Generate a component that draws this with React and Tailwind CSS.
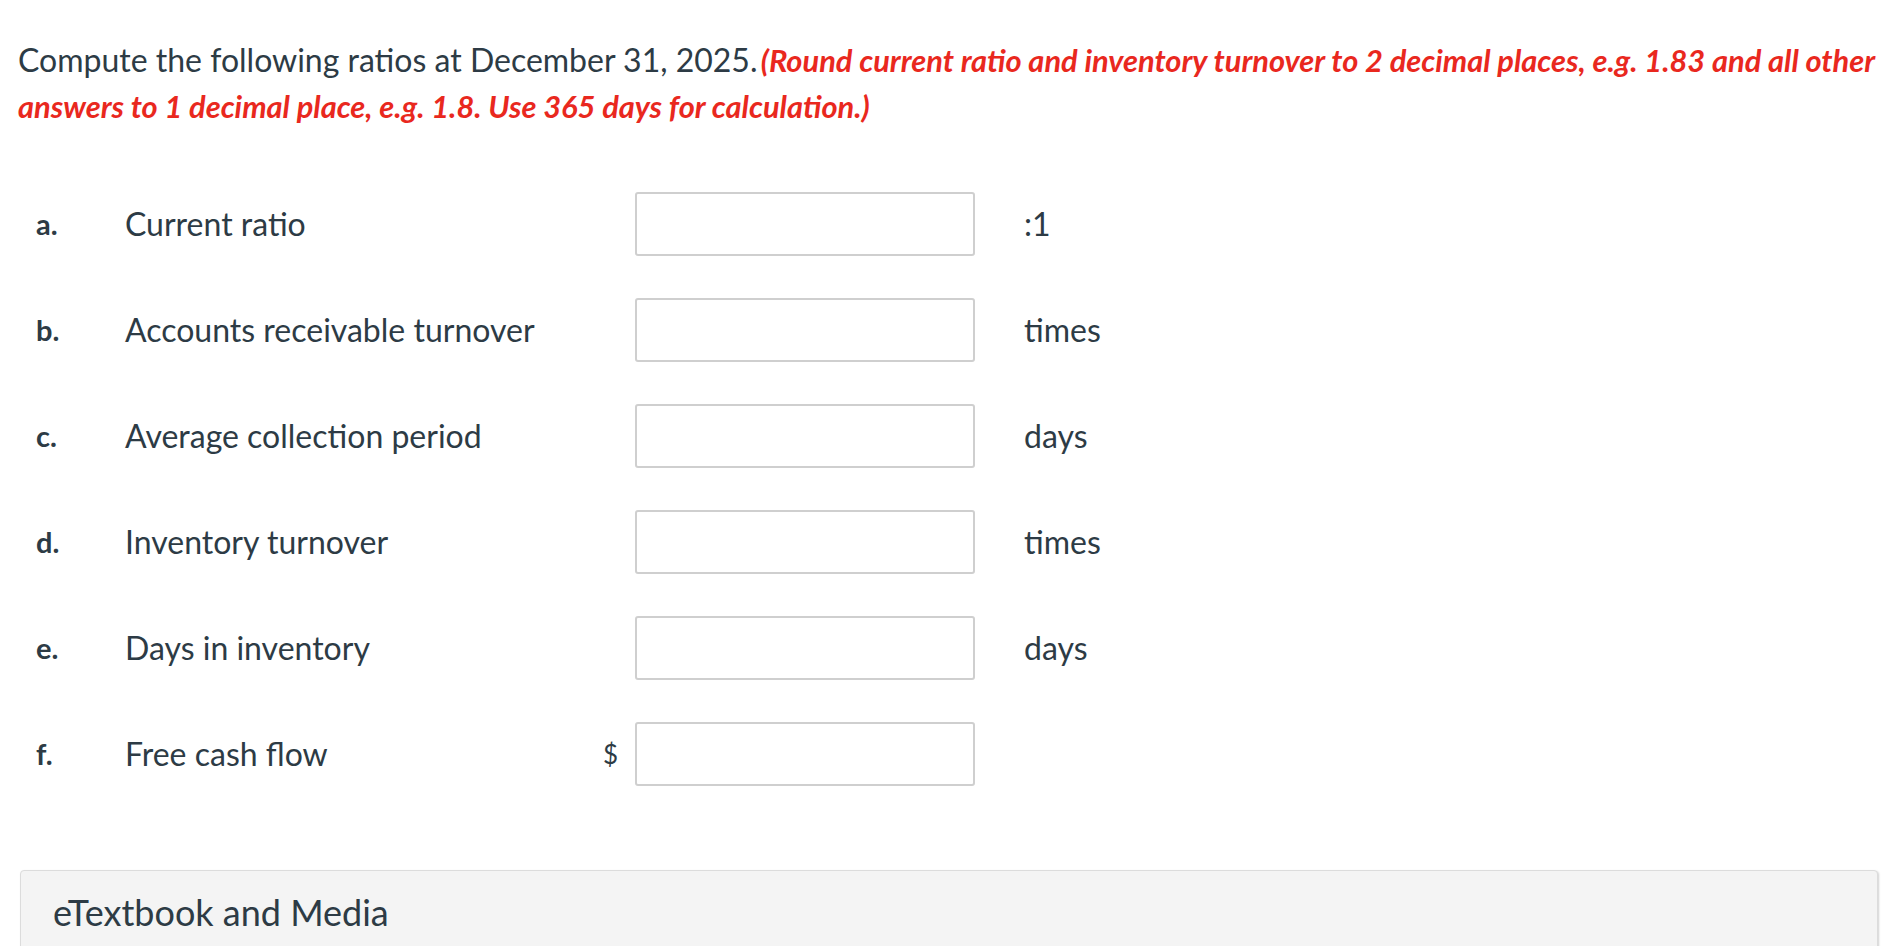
import React from 'react';

// Ratio rows shown in the exercise
const rows = [
  { letter: 'a.', label: 'Current ratio', unit: ':1' },
  { letter: 'b.', label: 'Accounts receivable turnover', unit: 'times' },
  { letter: 'c.', label: 'Average collection period', unit: 'days' },
  { letter: 'd.', label: 'Inventory turnover', unit: 'times' },
  { letter: 'e.', label: 'Days in inventory', unit: 'days' },
  { letter: 'f.', label: 'Free cash flow', unit: '', dollar: true },
];

const RatioRow = ({ letter, label, unit, dollar }) => (
  <div className="flex items-center h-[64px]">
    <span className="w-[89px] font-bold text-[29px]">{letter}</span>
    <span className="w-[478px] text-[32px]">{label}</span>
    <span className="w-[32px] text-[26px]">{dollar ? '$' : ''}</span>
    <input
      type="text"
      className="w-[340px] h-[64px] border-2 border-[#cfcfcf] rounded-[3px] bg-white outline-none"
    />
    <span className="ml-[49px] text-[32px]">{unit}</span>
  </div>
);

export default function App() {
  return (
    <div className="min-h-screen bg-white text-[#2d3b45] font-['Lato','Liberation_Sans',sans-serif] pl-[18px] pr-[26px] overflow-hidden">
      <p className="pt-[37px] text-[32px] leading-[46px] whitespace-nowrap">
        Compute the following ratios at December 31, 2025.{' '}
        <span className="ml-[-5px] text-[#e9281e] font-bold italic text-[30.8px] leading-[30px]">
          (Round current ratio and inventory turnover to 2 decimal places, e.g. 1.83 and all other
          <br />
          answers to 1 decimal place, e.g. 1.8. Use 365 days for calculation.)
        </span>
      </p>

      <div className="mt-[63px] pl-[18px] flex flex-col gap-[42px]">
        {rows.map((row) => (
          <RatioRow key={row.letter} {...row} />
        ))}
      </div>

      <div className="mt-[84px] ml-[2px] h-[120px] bg-[#f4f4f4] border border-[#dcdcdc] rounded-[4px] shadow-[1px_1px_2px_rgba(0,0,0,0.18)] px-[32px] pt-[22px]">
        <span className="text-[36px] leading-[38px]">eTextbook and Media</span>
      </div>
    </div>
  );
}
